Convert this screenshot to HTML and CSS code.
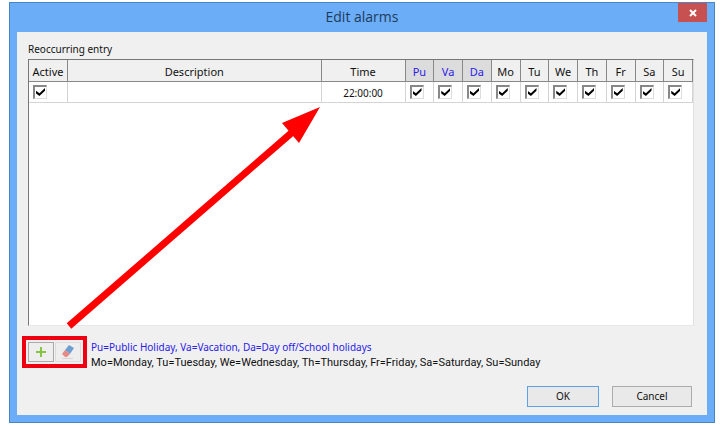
FILE: index.html
```html
<!DOCTYPE html>
<html lang="en">
<head>
<meta charset="utf-8">
<title>Edit alarms</title>
<link rel="stylesheet" href="styles.css">
</head>
<body>
<main class="window">
  <header class="titlebar">
    <h1 class="title">Edit alarms</h1>
    <button class="close" type="button" aria-label="Close"><svg width="8" height="8" viewBox="0 0 8 8"><path d="M1 1l6 6M7 1L1 7" stroke="#fff" stroke-width="2"/></svg></button>
  </header>
  <form class="content">
    <h2 class="caption" id="caption">Reoccurring entry</h2>
    <div class="panel">
      <table class="grid" aria-labelledby="caption">
        <colgroup><col class="c-active"><col><col class="c-time"><col class="c-day" span="10"></colgroup>
        <thead>
          <tr><th>Active</th><th>Description</th><th>Time</th><th class="special">Pu</th><th class="special">Va</th><th class="special">Da</th><th>Mo</th><th>Tu</th><th>We</th><th>Th</th><th>Fr</th><th>Sa</th><th>Su</th></tr>
        </thead>
        <tbody>
          <tr>
            <td><input class="check" type="checkbox" aria-label="Active" checked></td>
            <td></td>
            <td class="time">22:00:00</td>
            <td><input class="check" type="checkbox" aria-label="Pu" checked></td>
            <td><input class="check" type="checkbox" aria-label="Va" checked></td>
            <td><input class="check" type="checkbox" aria-label="Da" checked></td>
            <td><input class="check" type="checkbox" aria-label="Mo" checked></td>
            <td><input class="check" type="checkbox" aria-label="Tu" checked></td>
            <td><input class="check" type="checkbox" aria-label="We" checked></td>
            <td><input class="check" type="checkbox" aria-label="Th" checked></td>
            <td><input class="check" type="checkbox" aria-label="Fr" checked></td>
            <td><input class="check" type="checkbox" aria-label="Sa" checked></td>
            <td><input class="check" type="checkbox" aria-label="Su" checked></td>
          </tr>
        </tbody>
      </table>
    </div>
    <div class="footer">
      <div class="tools">
        <button class="tool" type="button" aria-label="Add"><svg width="12" height="12" viewBox="0 0 12 12"><path d="M6 1v10M1 6h10" stroke="#86c440" stroke-width="2"/></svg></button>
        <button class="tool erase" type="button" aria-label="Delete"><svg width="14" height="16" viewBox="0 0 14 16"><path d="M8 1l5 3-4 6-5-4z" fill="#6f9fce"/><path d="M4 6l5 4-3 3H4L1 10z" fill="#e58a87"/><path d="M1 14.500h11" stroke="#d5d5d5"/></svg></button>
      </div>
      <div class="legend">
        <p class="blue">Pu=Public Holiday, Va=Vacation, Da=Day off/School holidays</p>
        <p class="weekdays">Mo=Monday, Tu=Tuesday, We=Wednesday, Th=Thursday, Fr=Friday, Sa=Saturday, Su=Sunday</p>
      </div>
    </div>
    <div class="actions">
      <button class="button primary" type="button">OK</button>
      <button class="button" type="button">Cancel</button>
    </div>
  </form>
  <svg class="arrow" width="256" height="240" viewBox="0 0 256 240" aria-hidden="true"><path d="M3 235L230 38" stroke="#fe0000" stroke-width="7"/><path d="M254 16L216 32L233 52z" fill="#fe0000"/></svg>
</main>
</body>
</html>
```
FILE: styles.css
```css
* { box-sizing: border-box; }
body { margin: 0; background: #fff; color: #111; font: 10px/15px "Noto Sans", sans-serif; }
h1, h2, p { margin: 0; font-weight: normal; }
button { font: inherit; color: inherit; padding: 0; }
svg { display: block; }
.window { position: relative; margin: 2px 9px; padding: 0 7px 7px; background: #6badf6; border: 1px solid #4c86c0; }
.titlebar { height: 29px; display: grid; grid-template-columns: 1fr auto 1fr; align-items: start; }
.title { grid-column: 2; font: 14px/28px "Open Sans", sans-serif; color: #1f3b5c; }
.close { justify-self: end; display: grid; place-items: center; width: 29px; height: 19px; border: 0; background: #c75050; }
.content { background: #f0f0f0; padding: 9px 13px 8px 11px; }
.caption { font-size: 10px; line-height: 16px; }
.panel { height: 267px; margin-top: 2px; background: #fff; border: solid; border-width: 1px; border-color: #777 #e0e0e0 #e8e8e8 #777; }
.grid { width: 100%; border-collapse: separate; border-spacing: 0; table-layout: fixed; }
.c-active { width: 39px; }
.c-time { width: 84px; }
.c-day { width: 4.33%; }
th { height: 22px; padding: 2px 0 0; background: #f0f0f0; border: solid #888; border-width: 0 1px 1px 0; font: 11px/18px "Noto Sans", sans-serif; }
th.special { background: #dcdcdc; color: #2a20e8; }
td { height: 21px; padding: 0 4px; border: solid #d4d4d4; border-width: 0 1px 1px 0; }
.time { padding: 1px 0 0; text-align: center; line-height: 18px; }
.check { appearance: none; display: block; width: 14px; height: 14px; margin: 0; border: solid; border-width: 2px 1px 1px 2px; border-color: #888 #ddd #ddd #888; }
.check:checked::before { content: ""; display: block; width: 9px; height: 8px; margin: 1px; background: #000; clip-path: polygon(0 35%, 38% 65%, 100% 0, 100% 35%, 38% 100%, 0 70%); }
.footer { display: flex; align-items: flex-start; gap: 4px; margin: 10px 0 0 -6px; }
.tools { display: flex; gap: 1px; padding: 2px; border: 4px solid #ee0010; }
.tool { display: grid; place-items: center; width: 26px; height: 20px; border: 1px solid #aaa; background: #eee; }
.erase { border-color: #ddd; }
.legend { padding-top: 4px; }
.blue { color: #2a20e8; }
.weekdays { font-family: Roboto, sans-serif; font-size: 11px; }
.actions { display: flex; justify-content: flex-end; gap: 13px; margin-top: 16px; padding-right: 2px; }
.button { width: 80px; height: 21px; border: 1px solid #acacac; background: #e9e9e9; line-height: 19px; }
.primary { width: 72px; border-color: #5ba3e6; }
.arrow { position: absolute; left: 56px; top: 88px; }
```
